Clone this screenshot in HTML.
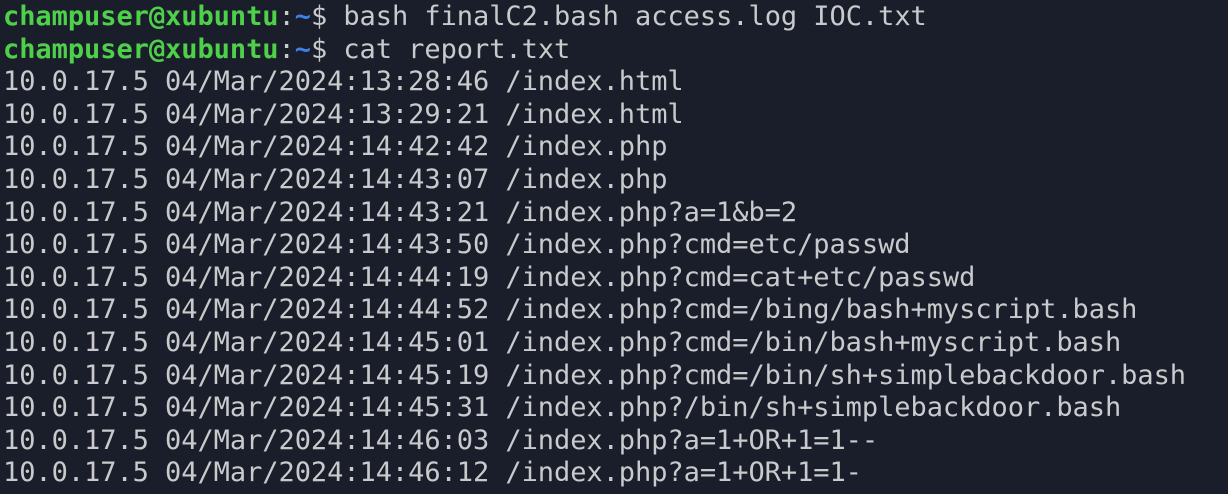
<!DOCTYPE html>
<html><head><style>
html,body{margin:0;padding:0;background:#1a1e2a;width:1228px;height:494px;overflow:hidden}
pre{margin:0;position:absolute;left:3px;top:1px;font-family:"DejaVu Sans Mono","Liberation Mono",monospace;font-size:27px;line-height:32.6px;color:#c9cacc;letter-spacing:-0.05px}
.g{color:#4fd04a;font-weight:bold}.b{color:#3f7fe6;font-weight:bold}
</style></head><body><pre><span class="g">champuser@xubuntu</span>:<span class="b">~</span>$ bash finalC2.bash access.log IOC.txt
<span class="g">champuser@xubuntu</span>:<span class="b">~</span>$ cat report.txt
10.0.17.5 04/Mar/2024:13:28:46 /index.html
10.0.17.5 04/Mar/2024:13:29:21 /index.html
10.0.17.5 04/Mar/2024:14:42:42 /index.php
10.0.17.5 04/Mar/2024:14:43:07 /index.php
10.0.17.5 04/Mar/2024:14:43:21 /index.php?a=1&amp;b=2
10.0.17.5 04/Mar/2024:14:43:50 /index.php?cmd=etc/passwd
10.0.17.5 04/Mar/2024:14:44:19 /index.php?cmd=cat+etc/passwd
10.0.17.5 04/Mar/2024:14:44:52 /index.php?cmd=/bing/bash+myscript.bash
10.0.17.5 04/Mar/2024:14:45:01 /index.php?cmd=/bin/bash+myscript.bash
10.0.17.5 04/Mar/2024:14:45:19 /index.php?cmd=/bin/sh+simplebackdoor.bash
10.0.17.5 04/Mar/2024:14:45:31 /index.php?/bin/sh+simplebackdoor.bash
10.0.17.5 04/Mar/2024:14:46:03 /index.php?a=1+OR+1=1--
10.0.17.5 04/Mar/2024:14:46:12 /index.php?a=1+OR+1=1-</pre></body></html>
